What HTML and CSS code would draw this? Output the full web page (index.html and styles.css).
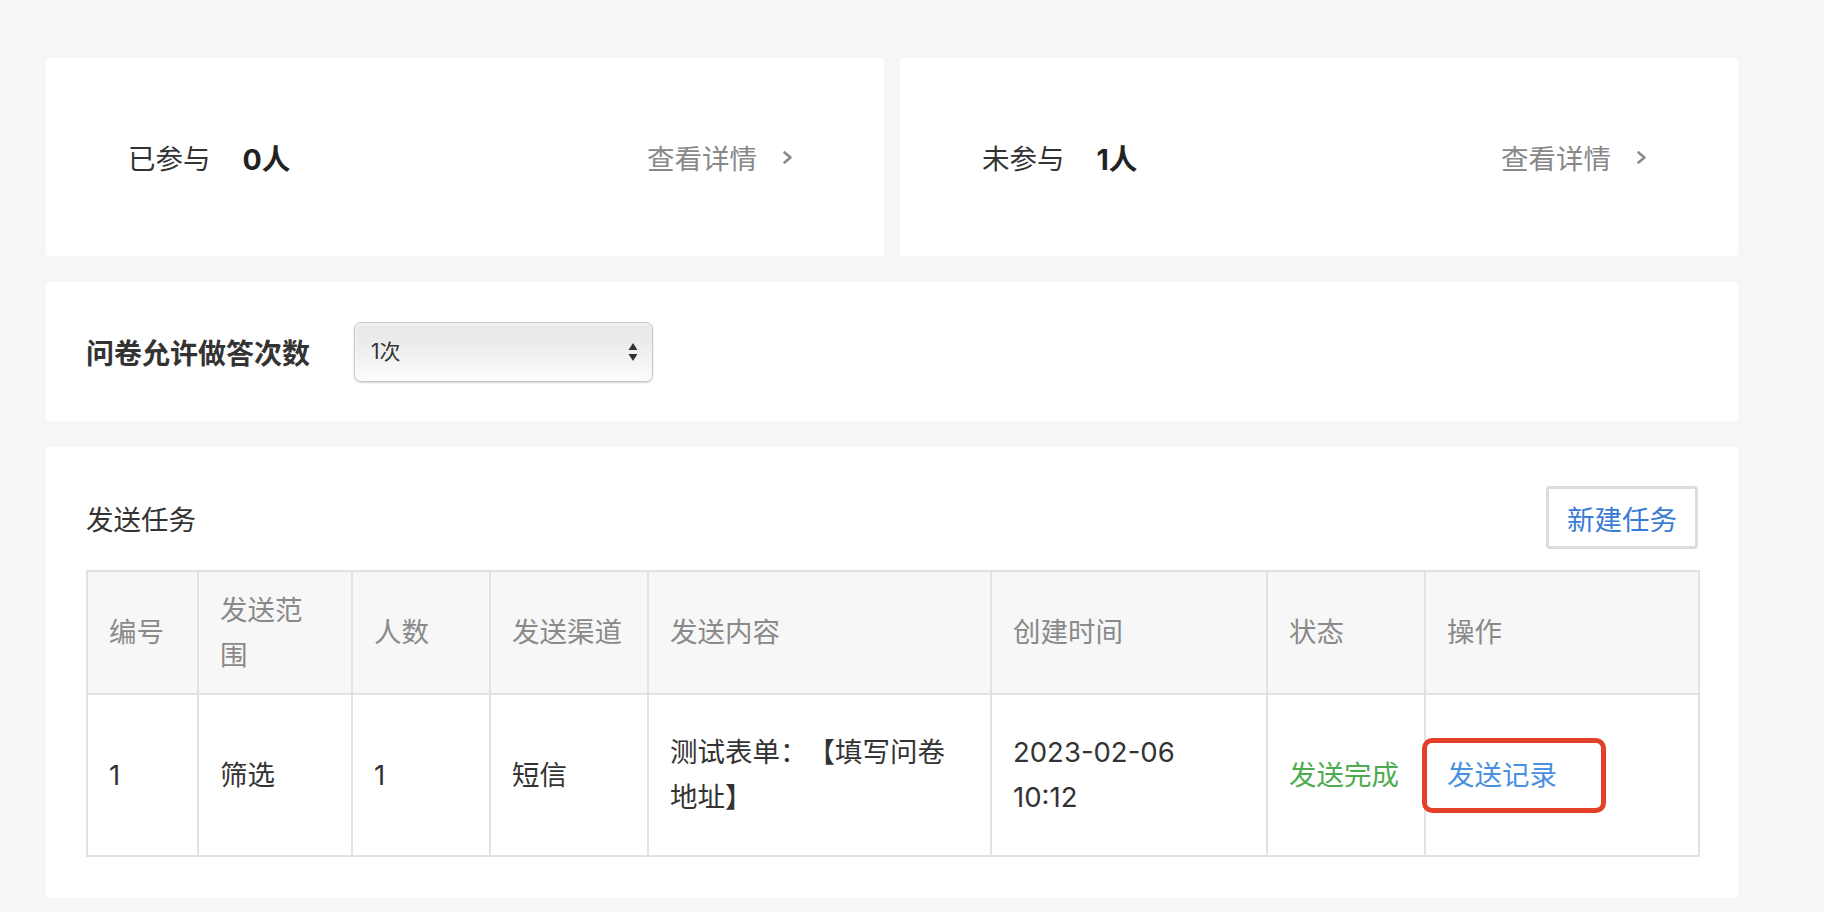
FILE: index.html
```html
<!DOCTYPE html>
<html lang="zh-CN">
<head>
<meta charset="utf-8">
<title>问卷发送</title>
<link rel="stylesheet" href="styles.css">
</head>
<body>
<div class="page">
  <div class="stats">
    <div class="card stat">
      <span class="stat-label">已参与</span>
      <span class="stat-value">0人</span>
      <a class="detail" href="#">查看详情<svg class="chev" width="11" height="15" viewBox="0 0 11 15"><path d="M2.5 2.5 L8.5 7.5 L2.5 12.5" fill="none" stroke="#8a8a8a" stroke-width="2.6" stroke-linecap="round" stroke-linejoin="round"/></svg></a>
    </div>
    <div class="card stat">
      <span class="stat-label">未参与</span>
      <span class="stat-value">1人</span>
      <a class="detail" href="#">查看详情<svg class="chev" width="11" height="15" viewBox="0 0 11 15"><path d="M2.5 2.5 L8.5 7.5 L2.5 12.5" fill="none" stroke="#8a8a8a" stroke-width="2.6" stroke-linecap="round" stroke-linejoin="round"/></svg></a>
    </div>
  </div>

  <div class="card setting">
    <span class="setting-label">问卷允许做答次数</span>
    <div class="select-wrap">
      <select class="select">
        <option>1次</option>
        <option>2次</option>
        <option>3次</option>
      </select>
      <svg class="select-arrows" width="10" height="20" viewBox="0 0 10 20"><path d="M5 1 L9.5 8 L0.5 8 Z" fill="#333"/><path d="M5 19 L9.5 12 L0.5 12 Z" fill="#333"/></svg>
    </div>
  </div>

  <div class="card tasks">
    <div class="tasks-head">
      <h2 class="tasks-title">发送任务</h2>
      <button class="btn-new" type="button">新建任务</button>
    </div>
    <table class="task-table">
      <colgroup>
        <col class="c1"><col class="c2"><col class="c3"><col class="c4">
        <col class="c5"><col class="c6"><col class="c7"><col class="c8">
      </colgroup>
      <thead>
        <tr>
          <th>编号</th>
          <th>发送范<br>围</th>
          <th>人数</th>
          <th>发送渠道</th>
          <th>发送内容</th>
          <th>创建时间</th>
          <th>状态</th>
          <th>操作</th>
        </tr>
      </thead>
      <tbody>
        <tr>
          <td>1</td>
          <td>筛选</td>
          <td>1</td>
          <td>短信</td>
          <td>测试表单：【填写问卷<br>地址】</td>
          <td>2023-02-06<br>10:12</td>
          <td class="status-done">发送完成</td>
          <td><a class="record" href="#">发送记录</a></td>
        </tr>
      </tbody>
    </table>
  </div>
</div>
</body>
</html>
```

FILE: styles.css
```css
html, body {
  margin: 0;
  padding: 0;
  background: #f6f6f6;
}

body {
  font-family: Inter, "Noto Sans CJK SC", "Noto Sans", sans-serif;
  color: #333;
  font-size: 27.5px;
  text-spacing-trim: space-all;
}

.page {
  width: 1692px;
  padding: 58px 0 0 46px;
  display: flex;
  flex-direction: column;
  gap: 26px;
}

.card {
  background: #fff;
  border-radius: 3px;
}

.stats {
  display: flex;
  gap: 16px;
}

.stat {
  flex: 1;
  height: 198px;
  box-sizing: border-box;
  padding: 0 91px 0 82px;
  display: flex;
  align-items: center;
}

.stat-label {
  color: #333;
}

.stat-value {
  margin-left: 32px;
  font-weight: bold;
  font-size: 28.5px;
  color: #222;
}

.detail {
  margin-left: auto;
  color: #888;
  text-decoration: none;
  display: flex;
  align-items: center;
  gap: 25px;
}

.chev {
  display: block;
}

.setting {
  height: 139px;
  box-sizing: border-box;
  padding: 0 40px;
  display: flex;
  align-items: center;
}

.setting-label {
  font-weight: bold;
  font-size: 28px;
  color: #333;
}

.select-wrap {
  position: relative;
  margin-left: 44px;
  width: 299px;
  height: 60px;
}

.select {
  appearance: none;
  -webkit-appearance: none;
  width: 100%;
  height: 100%;
  box-sizing: border-box;
  border: 1px solid #c9c9c9;
  border-radius: 7px;
  background: linear-gradient(to bottom, #e7e7e7 0%, #ececec 35%, #f6f6f6 75%, #fdfdfd 100%);
  box-shadow: inset 1px 2px 3px rgba(255,255,255,0.6), 0 1px 2px rgba(0,0,0,0.18);
  padding: 0 0 0 16px;
  font-family: Inter, "Noto Sans CJK SC", "Noto Sans", sans-serif;
  font-size: 21px;
  color: #333;
  outline: none;
}

.select-arrows {
  position: absolute;
  right: 15px;
  top: 20px;
  pointer-events: none;
}

.tasks {
  padding: 39px 40px 41px;
}

.tasks-head {
  display: flex;
  align-items: center;
  justify-content: space-between;
  height: 63px;
}

.tasks-title {
  margin: 0;
  font-size: 27.5px;
  font-weight: normal;
  color: #333;
}

.btn-new {
  width: 152px;
  height: 63px;
  box-sizing: border-box;
  border: 3px solid #dcdcdc;
  border-radius: 4px;
  background: #fff;
  color: #3a7bd5;
  font-family: Inter, "Noto Sans CJK SC", "Noto Sans", sans-serif;
  font-size: 27.5px;
  padding: 0;
  cursor: pointer;
}

.task-table {
  margin-top: 21px;
  width: 1612px;
  table-layout: fixed;
  border-collapse: collapse;
  border: 2px solid #e2e2e2;
  line-height: 45px;
}

.c1 { width: 111px; }
.c2 { width: 154px; }
.c3 { width: 138px; }
.c4 { width: 158px; }
.c5 { width: 343px; }
.c6 { width: 276px; }
.c7 { width: 158px; }
.c8 { width: 274px; }

.task-table th,
.task-table td {
  border: 2px solid #e2e2e2;
  text-align: left;
  vertical-align: middle;
  padding: 0 21px;
}

.task-table th {
  height: 121px;
  background: #f7f7f7;
  color: #8a8a8a;
  font-weight: normal;
}

.task-table td {
  height: 160px;
  color: #333;
}

.status-done {
  color: #4eab4e !important;
}

.record {
  position: relative;
  display: inline-block;
  color: #4a90e2;
  text-decoration: none;
}

.record::after {
  content: "";
  position: absolute;
  left: -25px;
  right: -49px;
  top: -15px;
  bottom: -15px;
  border: 5px solid #e3402a;
  border-radius: 10px;
}
```
